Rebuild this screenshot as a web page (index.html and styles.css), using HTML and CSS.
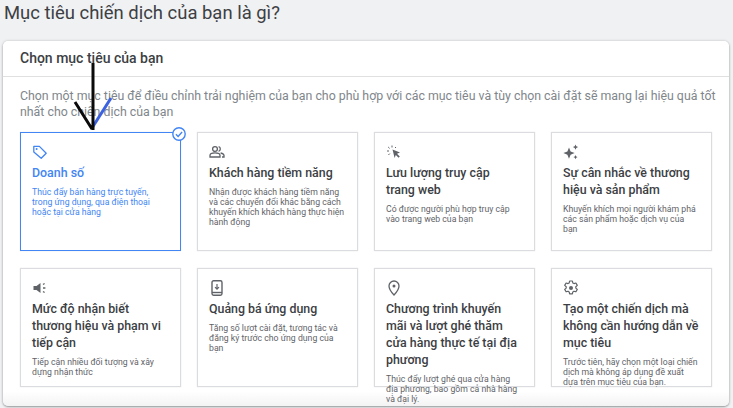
FILE: index.html
```html
<!DOCTYPE html>
<html lang="vi">
<head>
<meta charset="utf-8">
<title>Mục tiêu chiến dịch</title>
<link rel="stylesheet" href="styles.css">
</head>
<body>
<h1 class="page-title">Mục tiêu chiến dịch của bạn là gì?</h1>
<main class="panel">
  <h2 class="panel-head">Chọn mục tiêu của bạn</h2>
  <div class="panel-body">
    <p class="intro">Chọn một mục tiêu để điều chỉnh trải nghiệm của bạn cho phù hợp với các mục tiêu và tùy chọn cài đặt sẽ mang lại hiệu quả tốt nhất cho chiến dịch của bạn</p>
    <div class="grid">
      <article class="goal selected">
        <svg class="check" viewBox="0 0 16 16"><circle cx="8" cy="8" r="6.200" fill="#fff" stroke="#4285f4" stroke-width="1.400"/><path d="M4.900 8.200l2.200 2.200 4-4.400" fill="none" stroke="#4285f4" stroke-width="1.400"/></svg>
        <svg class="icon" viewBox="0 0 16 16"><path d="M1.800 2.400h5.600l6.800 6.800-5 5-7.400-6.200z" fill="none" stroke="#4285f4" stroke-width="1.300" stroke-linejoin="round"/><circle cx="4.600" cy="5" r="1" fill="#4285f4"/></svg>
        <h3>Doanh số</h3>
        <p>Thúc đẩy bán hàng trực tuyến, trong ứng dụng, qua điện thoại hoặc tại cửa hàng</p>
      </article>
      <article class="goal">
        <svg class="icon" viewBox="0 0 16 16"><circle cx="6" cy="5" r="2.400" fill="none" stroke="#5f6368" stroke-width="1.300"/><path d="M1 13v-1.600c0-1.600 2.600-2.600 5-2.600s5 1 5 2.600V13z" fill="none" stroke="#5f6368" stroke-width="1.300"/><path d="M9.600 2.700a2.400 2.400 0 0 1 0 4.600M11.600 9c1.800.4 3.400 1.200 3.400 2.600V13h-2" fill="none" stroke="#5f6368" stroke-width="1.300"/></svg>
        <h3>Khách hàng tiềm năng</h3>
        <p>Nhận được khách hàng tiềm năng và các chuyển đổi khác bằng cách khuyến khích khách hàng thực hiện hành động</p>
      </article>
      <article class="goal">
        <svg class="icon" viewBox="0 0 16 16"><path d="M6.500 5.500l7.500 3-3 1.200 2.800 2.800-1.200 1.200-2.800-2.800-1.200 3z" fill="#5f6368"/><path d="M6 1.500v2M2.200 3l1.400 1.400M1 7h2M2.400 11l1.400-1.400M10 3l-1 1" stroke="#5f6368" fill="none"/></svg>
        <h3>Lưu lượng truy cập<br>trang web</h3>
        <p>Có được người phù hợp truy cập vào trang web của bạn</p>
      </article>
      <article class="goal">
        <svg class="icon" viewBox="0 0 16 16"><path d="M6 3.500l1.600 4 4 1.600-4 1.600-1.600 4-1.600-4-4-1.600 4-1.600z" fill="#5f6368"/><path d="M12.500.5l.8 1.800 1.800.8-1.800.8-.8 1.800-.8-1.800-1.800-.8 1.800-.8zM12.500 11l.7 1.400 1.400.7-1.400.7-.7 1.400-.7-1.400-1.400-.7 1.400-.7z" fill="#5f6368"/></svg>
        <h3>Sự cân nhắc về thương hiệu và sản phẩm</h3>
        <p>Khuyến khích mọi người khám phá các sản phẩm hoặc dịch vụ của bạn</p>
      </article>
      <article class="goal">
        <svg class="icon" viewBox="0 0 16 16"><path d="M1.500 6h3l4-3v10l-4-3h-3z" fill="#5f6368"/><path d="M11 4.500l1.600-1M11 8h2.400M11 11.500l1.600 1" stroke="#5f6368" stroke-width="1.300" fill="none"/></svg>
        <h3>Mức độ nhận biết thương hiệu và phạm vi tiếp cận</h3>
        <p>Tiếp cận nhiều đối tượng và xây dựng nhận thức</p>
      </article>
      <article class="goal">
        <svg class="icon" viewBox="0 0 16 16"><rect x="3" y="0.800" width="10" height="14.400" rx="1.600" fill="none" stroke="#5f6368" stroke-width="1.400"/><path d="M3 12.500h10" stroke="#5f6368" stroke-width="1.400"/><path d="M8 4v5M6 7.200l2 2 2-2" fill="none" stroke="#5f6368" stroke-width="1.200"/></svg>
        <h3>Quảng bá ứng dụng</h3>
        <p>Tăng số lượt cài đặt, tương tác và đăng ký trước cho ứng dụng của bạn</p>
      </article>
      <article class="goal">
        <svg class="icon" viewBox="0 0 16 16"><path d="M8 15S3 9.800 3 6a5 5 0 0 1 10 0c0 3.800-5 9-5 9z" fill="none" stroke="#5f6368" stroke-width="1.300"/><circle cx="8" cy="6" r="1.500" fill="#5f6368"/></svg>
        <h3>Chương trình khuyến mãi và lượt ghé thăm cửa hàng thực tế tại địa phương</h3>
        <p>Thúc đẩy lượt ghé qua cửa hàng địa phương, bao gồm cả nhà hàng và đại lý.</p>
      </article>
      <article class="goal">
        <svg class="icon" viewBox="0 0 16 16"><path d="M6.600 1h2.800l.4 1.900 1.200.7 1.900-.6 1.400 2.400-1.500 1.300v1.400l1.500 1.300-1.400 2.400-1.900-.6-1.200.7-.4 1.900H6.600l-.4-1.900-1.200-.7-1.900.6-1.400-2.400 1.500-1.300V6.700L1.700 5.400 3.100 3l1.900.6 1.200-.7z" fill="none" stroke="#5f6368" stroke-width="1.200" stroke-linejoin="round"/><circle cx="8" cy="8" r="2" fill="#5f6368"/></svg>
        <h3>Tạo một chiến dịch mà không cần hướng dẫn về mục tiêu</h3>
        <p>Trước tiên, hãy chọn một loại chiến dịch mà không áp dụng đề xuất dựa trên mục tiêu của bạn.</p>
      </article>
    </div>
  </div>
</main>
<svg class="annotation" viewBox="0 0 40 72"><path d="M19 66L38 36" stroke="#3b62e0" stroke-width="3" fill="none"/><path d="M2 40L19 67M20 1V68" stroke="#0a0a0a" stroke-width="3" fill="none"/></svg>
</body>
</html>
```
FILE: styles.css
```css
* { box-sizing: border-box; }
html, body { margin: 0; height: 408px; overflow: hidden; }
body {
  position: relative;
  background: #f0f1f3;
  font-family: Roboto, "Liberation Sans", sans-serif;
  color: #3c4043;
  padding: 0 4px 0 3px;
}
.page-title {
  margin: 0;
  padding: 0 0 0 1px;
  height: 41px;
  font-size: 18.450px;
  line-height: 26px;
  font-weight: 400;
  color: #3c4043;
}
.panel {
  height: 365px;
  background: linear-gradient(#fff 96%, #f3f3f4);
  border-radius: 5px;
  box-shadow: 0 1px 2px rgba(60,64,67,.45), 0 0 3px rgba(60,64,67,.2);
}
.panel-head {
  margin: 0;
  height: 36px;
  padding: 8px 17px 0;
  font-size: 14px;
  line-height: 19px;
  font-weight: 500;
  color: #3c4043;
  border-bottom: 1px solid #e0e0e0;
}
.panel-body { padding: 11px 17px 0; }
.intro {
  margin: 0 -8px 12px 0;
  font-size: 12.350px;
  line-height: 16px;
  color: #80868b;
}
.grid {
  display: grid;
  grid-template-columns: repeat(4, 161px);
  grid-template-rows: 119px 119px;
  column-gap: 16px;
  row-gap: 17px;
}
.goal {
  position: relative;
  padding: 11px 11px 0;
  border: 1px solid #dadce0;
  box-shadow: 0 0 1px #dadce0;
  background: #fff;
}
.goal .icon { display: block; width: 16px; height: 16px; }
.goal h3 {
  margin: 4px 0 6px;
  font-family: Roboto, sans-serif;
  font-size: 12.400px;
  line-height: 17px;
  font-weight: 500;
  color: #3c4043;
}
.goal p {
  margin: 0;
  font-size: 8.700px;
  line-height: 10px;
  color: #5f6368;
}
.selected { border: 1.500px solid #4285f4; }
.selected h3, .selected p { color: #4285f4; }
.check {
  position: absolute;
  top: -7px;
  right: -7px;
  width: 16px;
  height: 16px;
}
.annotation {
  position: absolute;
  left: 73px;
  top: 62px;
  width: 40px;
  height: 72px;
}
```
